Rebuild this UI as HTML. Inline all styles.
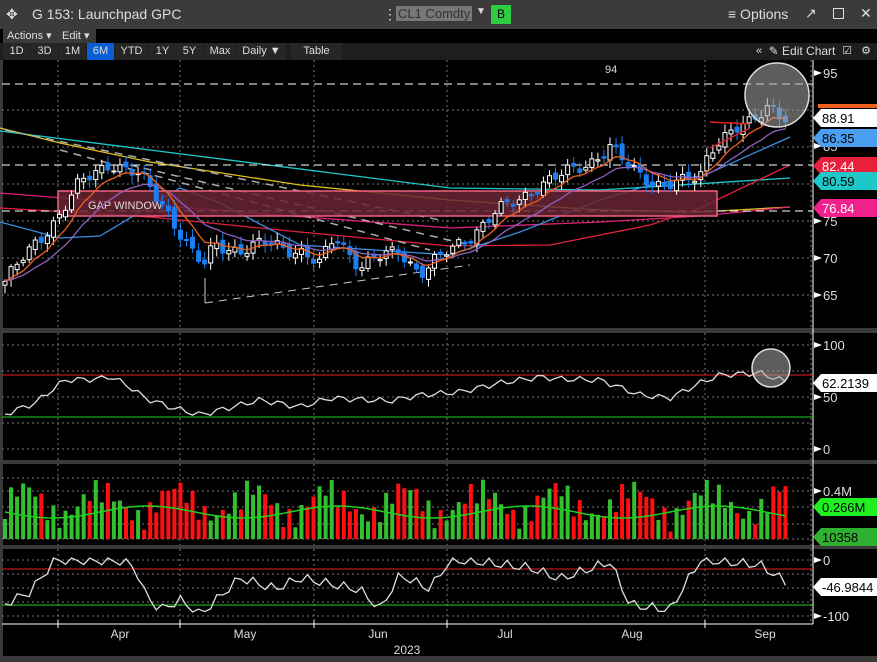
<!DOCTYPE html>
<html><head><meta charset="utf-8"><style>
body{margin:0;background:#000;width:877px;height:662px;overflow:hidden;font-family:"Liberation Sans",sans-serif;}
.top{position:absolute;left:0;top:0;width:877px;height:29px;background:#3b3b3b;color:#ddd;font-size:14px}
.row2{position:absolute;left:0;top:29px;width:877px;height:14px;background:#000}
.row3{position:absolute;left:0;top:43px;width:877px;height:17px;background:#1e1e1e}
.btn{position:absolute;top:0;height:17px;line-height:17px;font-size:11px;color:#ddd;text-align:center;background:#262626}
svg{position:absolute;left:0;top:0}
</style></head><body>
<div class="top">
<span style="position:absolute;left:6px;top:6px;font-size:14px">✥</span>
<span style="position:absolute;left:32px;top:6px">G 153: Launchpad GPC</span>
<span style="position:absolute;left:383px;top:6px">⋮</span>
<span style="position:absolute;left:396px;top:6px;background:#777;color:#333;padding:0 2px;font-size:13px">CL1 Comdty</span>
<span style="position:absolute;left:476px;top:6px;font-size:10px">▼</span>
<span style="position:absolute;left:491px;top:5px;width:20px;height:19px;background:#2ecc40;color:#000;text-align:center;line-height:19px;font-size:12px">B</span>
<span style="position:absolute;left:728px;top:6px">≡ Options</span>
<span style="position:absolute;left:805px;top:5px">↗</span>
<span style="position:absolute;left:833px;top:8px;width:9px;height:9px;border:1.5px solid #ddd"></span>
<span style="position:absolute;left:860px;top:5px">✕</span>
</div>
<div class="row2">
<span style="position:absolute;left:3px;top:0;height:14px;width:54px;background:#3a3a3a;color:#ddd;font-size:11px;line-height:14px;padding-left:4px">Actions ▾</span>
<span style="position:absolute;left:59px;top:0;height:14px;width:34px;background:#3a3a3a;color:#ddd;font-size:11px;line-height:14px;padding-left:3px">Edit ▾</span>
</div>
<div class="row3">
<div class="btn" style="left:3px;width:27px">1D</div>
<div class="btn" style="left:31px;width:27px">3D</div>
<div class="btn" style="left:59px;width:27px">1M</div>
<div class="btn" style="left:87px;width:27px;background:#0a5ed4">6M</div>
<div class="btn" style="left:115px;width:33px">YTD</div>
<div class="btn" style="left:149px;width:27px">1Y</div>
<div class="btn" style="left:176px;width:27px">5Y</div>
<div class="btn" style="left:204px;width:32px">Max</div>
<div class="btn" style="left:237px;width:49px">Daily ▼</div>
<div class="btn" style="left:291px;width:51px">Table</div>
<div class="btn" style="left:751px;width:16px;background:#1e1e1e">«</div>
<div class="btn" style="left:768px;width:68px;background:#1e1e1e;font-size:12px">✎ Edit Chart</div>
<div class="btn" style="left:840px;width:14px;background:#1e1e1e">☑</div>
<div class="btn" style="left:858px;width:16px;background:#1e1e1e">⚙</div>
</div>
<svg id="s" width="877" height="662" style="top:0"></svg>
<script>
var s=document.getElementById('s'),h='';
function L(x1,y1,x2,y2,c,w,d){h+='<line x1="'+x1+'" y1="'+y1+'" x2="'+x2+'" y2="'+y2+'" stroke="'+c+'" stroke-width="'+(w||1)+'"'+(d?' stroke-dasharray="'+d+'"':'')+'/>';}
function P(pts,c,w,d,f){h+='<polyline points="'+pts.map(p=>p.join(',')).join(' ')+'" fill="'+(f||'none')+'" stroke="'+c+'" stroke-width="'+(w||1)+'"'+(d?' stroke-dasharray="'+d+'"':'')+'/>';}
function T(x,y,t,c,sz,a){h+='<text x="'+x+'" y="'+y+'" fill="'+(c||'#ddd')+'" font-size="'+(sz||12)+'" font-family="Liberation Sans, sans-serif"'+(a?' text-anchor="'+a+'"':'')+'>'+t+'</text>';}
h+='<rect x="0" y="60" width="877" height="602" fill="#000"/>';
[[328,333],[460,464],[545,549]].forEach(r=>h+='<rect x="0" y="'+r[0]+'" width="877" height="'+(r[1]-r[0])+'" fill="#3a3a3a"/>');
h+='<rect x="0" y="656" width="877" height="6" fill="#3a3a3a"/>';
L(1.5,60,1.5,656,'#3a3a3a',3);
L(813,60,813,624,'#fff',1);L(2,624,813,624,'#fff',1);
var vx=[58,180,314,447,705,811];
function grid(ys,t,b){ys.forEach(y=>L(2,y,813,y,'#777',1,'2,3'));vx.forEach(x=>L(x,t,x,b,'#777',1,'2,3'));}
grid([110,147,184,221,258,295],60,328);
grid([345,371,397,423,449],333,460);
grid([478,491,507,524,539],464,545);
grid([560,574,588,602,616],549,624);
vx.slice(0,5).forEach(x=>L(x,620,x,628,'#fff',1));
P([[0,131],[150,150],[450,188],[600,190],[790,178]],'#1fc8c8',1.3);
P([[0,128],[60,143],[150,162],[300,185],[450,200],[600,210],[700,212],[790,207]],'#e0c020',1.3);
P([[0,193],[150,205],[450,228],[600,222],[700,216],[790,207]],'#e0207a',1.3);
P([[0,208],[150,217],[300,232],[450,246],[550,245],[650,225],[700,208],[790,165]],'#e0203a',1.3);
P([[0,222],[60,238],[100,236],[180,188],[220,203],[300,245],[450,255],[520,232],[600,200],[650,185],[705,175],[790,137]],'#3a8fe0',1.3);
L(2,84,813,84,'#fff',1,'8,5');L(2,165,813,165,'#fff',1,'8,5');L(2,211,813,211,'#fff',1,'8,5');
L(5,130,440,220,'#aaa',1.5,'8,6');L(60,150,430,250,'#aaa',1.5,'8,6');L(130,165,470,245,'#aaa',1.5,'8,6');
L(205,303,470,265,'#ccc',1,'8,6');L(205,278,205,303,'#ccc',1);
h+='<rect x="58" y="191" width="659" height="25" fill="#6a2535" fill-opacity="0.85" stroke="#f06080" stroke-width="1.5"/>';
T(88,209,'GAP WINDOW','#ddd',11);
var key=[[0,66],[30,71],[60,76],[80,80],[110,83],[140,81],[165,77],[195,70],[205,69],[215,72],[240,71],[270,72],[300,71],[320,69],[335,73],[360,69],[380,70],[400,71],[420,68],[440,70],[470,73],[495,76],[520,78],[540,80],[560,81],[590,83],[610,85],[630,82],[660,80],[680,80],[700,81],[710,85],[730,87],[750,88],[770,91],[785,89]];
function ip(k,x){for(var i=1;i<k.length;i++)if(x<=k[i][0]){var a=k[i-1],b=k[i];return a[1]+(b[1]-a[1])*(x-a[0])/(b[0]-a[0]);}return k[k.length-1][1];}
function Y(p){return 73+(95-p)*7.4;}
var rk=[[0,416],[35,403],[65,380],[100,379],[110,376],[130,387],[145,398],[170,407],[200,415],[260,400],[300,407],[330,398],[390,401],[420,395],[460,392],[500,383],[540,377],[560,379],[600,380],[640,395],[670,398],[700,383],[720,375],[760,373],[790,383]];
var bk=[[0,606],[30,592],[55,560],[120,561],[135,567],[145,594],[160,610],[180,600],[200,615],[240,578],[275,589],[300,578],[360,590],[380,609],[400,575],[430,589],[450,560],[480,562],[530,568],[560,579],[610,562],[630,605],[670,610],[700,560],[760,565],[790,585]];
var n=130,C=[],X=[];for(var i=0;i<n;i++){var x=5+i*6.05;X.push(x);C.push(ip(key,x)+Math.sin(i*1.7)*0.7+Math.sin(i*0.63)*0.5);}
var e1=C[0],e2=C[0],o1=[],o2=[],rsi=[],cc=[],vol=[];
for(i=0;i<n;i++){var o=i?C[i-1]+Math.sin(i*2.3)*0.4:C[0]-0.5,c=C[i],up=c>=o;
var hi=Math.max(o,c)+0.3+Math.abs(Math.sin(i*3.1))*0.8,lo=Math.min(o,c)-0.3-Math.abs(Math.cos(i*2.7))*0.8;
L(X[i],Y(hi),X[i],Y(lo),up?'#fff':'#1a7ff0',1);
h+='<rect x="'+(X[i]-2)+'" y="'+Y(Math.max(o,c))+'" width="4" height="'+Math.max(1,Math.abs(o-c)*7.4)+'" fill="'+(up?'#000':'#1a7ff0')+'" stroke="'+(up?'#fff':'#1a7ff0')+'" stroke-width="1"/>';
e1=e1+(c-e1)*0.25;e2=e2+(c-e2)*0.13;o1.push([X[i],Y(e1)]);o2.push([X[i],Y(e2)]);
rsi.push([X[i],(ip(rk,X[i])+Math.sin(i*1.9)*3).toFixed(1)]);
cc.push([X[i],Math.max(558,Math.min(612,ip(bk,X[i])+Math.sin(i*2.1)*5)).toFixed(1)]);
var v=Math.max(2,20+25*Math.abs(Math.sin(i*1.37))+15*Math.sin(i*0.5));
h+='<rect x="'+(X[i]-2)+'" y="'+(539-v)+'" width="4" height="'+v+'" fill="'+(up?'#33c030':'#ff1010')+'"/>';vol.push([X[i],(512+Math.sin(i*0.2)*6).toFixed(1)]);}
P(o2,'#9060c0',1.3);P(o1,'#f06018',1.3);
L(710,122,750,124,'#e02020',1.5);L(710,148,750,128,'#e02020',1.5);
h+='<circle cx="777" cy="95" r="32" fill="#aaa" fill-opacity="0.55" stroke="#ddd" stroke-width="1.5"/>';
T(605,73,'94','#ddd',11);
L(2,375,813,375,'#e02020',1);L(2,417,813,417,'#20d020',1);P(rsi,'#ddd',1.3);
h+='<circle cx="771" cy="368" r="19" fill="#aaa" fill-opacity="0.55" stroke="#ddd" stroke-width="1.5"/>';
P(vol,'#20d020',1.5);
L(2,569,813,569,'#e02020',1);L(2,605,813,605,'#20d020',1);P(cc,'#ddd',1.3);
function ax(y,t){h+='<polygon points="814,'+(y-3)+' 822,'+y+' 814,'+(y+3)+'" fill="#fff"/>';T(823,y+5,t,'#ddd',13);}
ax(73,'95');ax(146,'85');ax(221,'75');ax(258,'70');ax(295,'65');
ax(345,'100');ax(397,'50');ax(449,'0');ax(491,'0.4M');ax(560,'0');ax(616,'-100');
function tag(y,t,bg,fg){h+='<polygon points="813,'+y+' 821,'+(y-9)+' 877,'+(y-9)+' 877,'+(y+9)+' 821,'+(y+9)+'" fill="'+bg+'"/>';T(822,y+5,t,fg,13);}
h+='<rect x="818" y="104" width="59" height="4" fill="#f06018"/>';
tag(118,'88.91','#fff','#000');tag(138,'86.35','#4a9ff0','#000');tag(166,'82.44','#e8203c','#fff');tag(181,'80.59','#1fc8c8','#000');tag(208,'76.84','#f0208c','#fff');
tag(383,'62.2139','#fff','#000');tag(507,'0.266M','#20f020','#000');tag(537,'10358','#30b030','#000');tag(587,'-46.9844','#fff','#000');
[['Apr',120],['May',245],['Jun',378],['Jul',505],['Aug',632],['Sep',765]].forEach(a=>T(a[1],638,a[0],'#ddd',12,'middle'));
T(407,654,'2023','#ddd',12,'middle');
s.innerHTML=h;
</script>
</body></html>
